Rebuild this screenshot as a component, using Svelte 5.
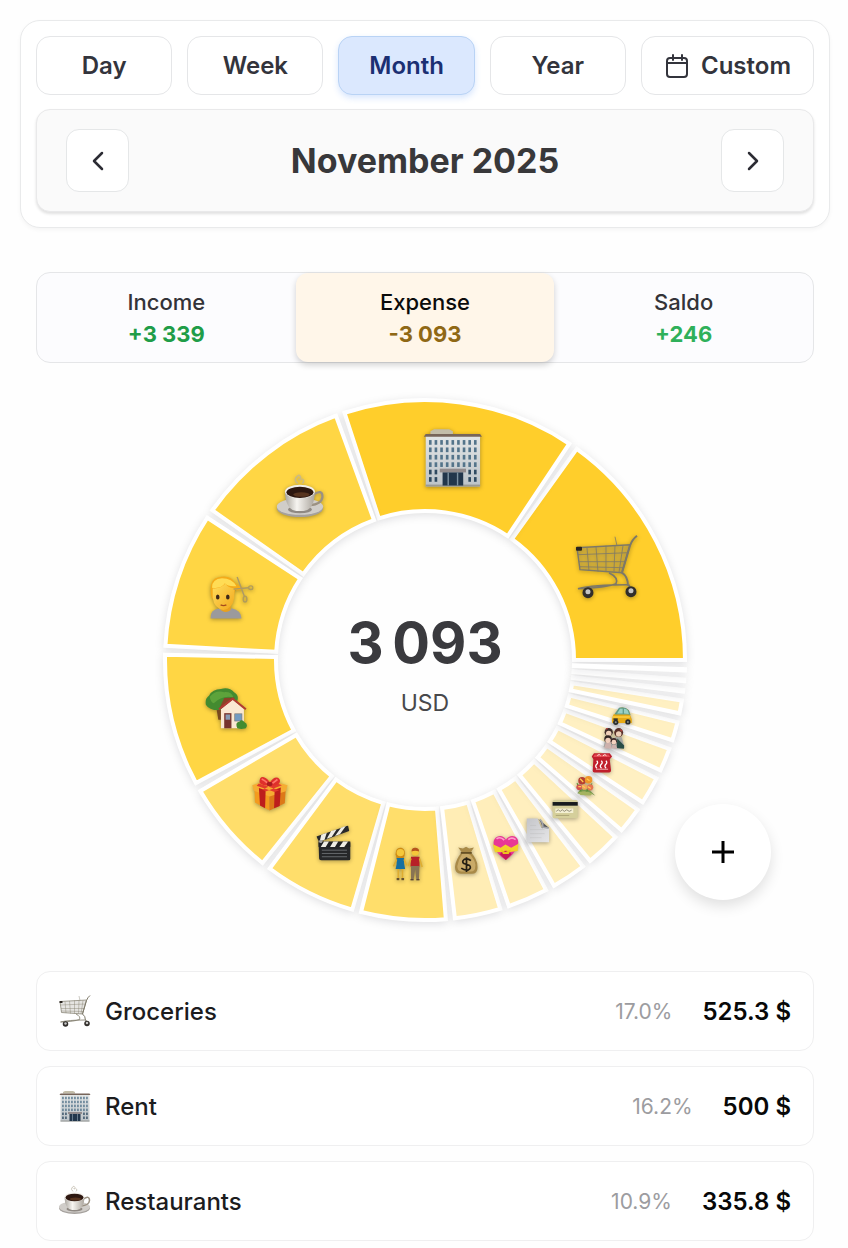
<script>
  const periods = ['Day', 'Week', 'Month', 'Year'];
  let period = $state('Month');

  const tabs = [
    { id: 'income', label: 'Income', value: '+3\u00a0339' },
    { id: 'expense', label: 'Expense', value: '-3\u00a0093' },
    { id: 'saldo', label: 'Saldo', value: '+246' }
  ];
  let activeTab = $state('expense');

  // share is in percent of the month total
  const categories = [
    { icon: 'cart', share: 17, size: 64, color: '#ffce2b' },
    { icon: 'office', share: 16.2, size: 60, color: '#ffce2b' },
    { icon: 'coffee', share: 10.9, size: 48, color: '#ffd644' },
    { icon: 'haircut', share: 9.4, size: 46, color: '#ffd644' },
    { icon: 'house', share: 9.2, size: 42, color: '#ffd644' },
    { icon: 'gift', share: 6.6, size: 36, color: '#ffde6b' },
    { icon: 'movie', share: 6.4, size: 35, color: '#ffde6b' },
    { icon: 'couple', share: 5.9, size: 34, color: '#ffde6b' },
    { icon: 'money', share: 3.2, size: 28, color: '#ffedb5' },
    { icon: 'heart', share: 2.8, size: 26, color: '#ffeebb' },
    { icon: 'paper', share: 2.4, size: 26, color: '#ffefbe' },
    { icon: 'card', share: 2.4, size: 26, color: '#ffefbe' },
    { icon: 'flowers', share: 1.8, size: 20, color: '#fff0c2' },
    { icon: 'toaster', share: 1.9, size: 21, color: '#fff0c2' },
    { icon: 'family', share: 1.6, size: 22, color: '#fff0c2' },
    { icon: 'car', share: 1.3, size: 21, color: '#fff0c2' },
    { share: 0.9, color: '#fff0c2' },
    { share: 0.1, color: '#fffdf6' },
    { share: 0.1, color: '#fffdf6' },
    { share: 0.1, color: '#fffdf6' }
  ];

  const cx = 389;
  const cy = 281;
  const outer = 260;
  const inner = 149;
  const pad = 2;

  function point(radius, deg) {
    const a = (deg * Math.PI) / 180;
    return { x: cx + radius * Math.cos(a), y: cy - radius * Math.sin(a) };
  }

  function buildSlices(items) {
    const total = items.reduce((sum, c) => sum + c.share, 0);
    const perUnit = (360 - items.length * pad) / total;
    let start = 0;
    return items.map(c => {
      const end = start + c.share * perUnit;
      const a = point(outer, start);
      const b = point(outer, end);
      const d = point(inner, end);
      const e = point(inner, start);
      const mid = point((outer + inner) / 2, (start + end) / 2);
      start = end + pad;
      return {
        ...c,
        mid,
        path: `M${a.x} ${a.y}A${outer} ${outer} 0 0 0 ${b.x} ${b.y}L${d.x} ${d.y}A${inner} ${inner} 0 0 1 ${e.x} ${e.y}Z`
      };
    });
  }

  const slices = buildSlices(categories);

  const rows = [
    { icon: 'cart', name: 'Groceries', percent: '17.0%', amount: '525.3 $' },
    { icon: 'office', name: 'Rent', percent: '16.2%', amount: '500 $' },
    { icon: 'coffee', name: 'Restaurants', percent: '10.9%', amount: '335.8 $' }
  ];
</script>

<svg class="sprite" aria-hidden="true">
  <defs>
    <linearGradient id="wall" x1="0" x2="0" y1="0" y2="1">
      <stop offset="0" stop-color="#e3e6e6" />
      <stop offset="1" stop-color="#bcc3c8" />
    </linearGradient>
    <linearGradient id="china" x1="0" x2="1" y1="0" y2="0">
      <stop offset="0" stop-color="#aaa69f" />
      <stop offset="0.4" stop-color="#f7f5f1" />
      <stop offset="1" stop-color="#aaa49c" />
    </linearGradient>
    <linearGradient id="skin" x1="0" x2="1" y1="0" y2="1">
      <stop offset="0" stop-color="#ffdf5e" />
      <stop offset="1" stop-color="#f2a81d" />
    </linearGradient>
    <linearGradient id="sheet" x1="0" x2="1" y1="0" y2="1">
      <stop offset="0" stop-color="#c4c5c9" />
      <stop offset="1" stop-color="#e6e6e8" />
    </linearGradient>
  </defs>

  <symbol id="cart" viewBox="0 0 64 64">
    <path d="M2 13L55 10L47 38L5 35Z" fill="#8a8578" fill-opacity="0.22" />
    <g fill="none" stroke="#7d7868" stroke-width="0.8">
      <path d="M2 13L55 10L47 38L5 35Z" stroke-width="1.4" />
      <path d="M3 20L53 18M4 27L50.500 27M4.500 32L49 33" />
      <path d="M12 13L14 36M21 12L23 37M31 11L31 37M40 11L39 37M48 11L44 38" />
      <path d="M40 2L42 11" />
      <path d="M62 1Q57 5 55 11L47 38Q53 42 53 51" stroke-width="2" />
      <path d="M34 38Q44 43 41 49Q31 53 3 54Q18 50 53 50" stroke-width="1.600" />
      <path d="M54 50L55 56M13 52L14 57" stroke-width="2" />
    </g>
    <rect x="1" y="12" width="6" height="4" rx="1" fill="#29241f" />
    <circle cx="13" cy="58" r="5.500" fill="#312e2b" />
    <circle cx="56" cy="57" r="5.500" fill="#312e2b" />
    <circle cx="13" cy="57" r="2.500" fill="#c5c5c4" />
    <circle cx="56" cy="56" r="2.500" fill="#c5c5c4" />
  </symbol>

  <symbol id="office" viewBox="0 0 64 64">
    <path d="M8 7V4L12 2H28L32 4V7Z" fill="#c3bda9" />
    <rect x="3" y="9" width="58" height="54" fill="url(#wall)" />
    <path d="M3 7H61L63 10H1Z" fill="#77655a" />
    <rect x="3" y="61" width="58" height="2" fill="#9a9a95" />
    {#each [0, 1, 2, 3, 4, 5] as r}
      {#each [0, 1, 2, 3, 4, 5, 6, 7, 8] as c}
        {#if r < 4 || c < 2 || c > 6}
          <rect x={6.500 + c * 6} y={13.500 + r * 7.900} width="2.800" height="5" fill={r > 3 ? '#2f4a60' : '#53748a'} />
        {/if}
      {/each}
    {/each}
    <rect x="18" y="44" width="28" height="4" fill="#918b8d" />
    <rect x="21" y="48" width="22" height="14" fill="#22364b" />
    <path d="M27 48V62M37 48V62" stroke="#7d92a1" stroke-width="1.500" />
  </symbol>

  <symbol id="coffee" viewBox="0 0 64 64">
    <path d="M28 13Q22 8 27 4Q30 0 32 5Q33 10 29 7M34 13Q38 10 34 7" fill="none" stroke="#b9b2a3" stroke-opacity="0.700" stroke-width="2" />
    <ellipse cx="31" cy="46" rx="31" ry="12" fill="#a5a19d" />
    <ellipse cx="31" cy="44" rx="31" ry="11" fill="#d0cdc9" />
    <ellipse cx="31" cy="48" rx="16" ry="5" fill="#8f8983" />
    <path d="M49 28Q61 20 61 31Q60 41 44 42" fill="none" stroke="#9b9182" stroke-width="3" />
    <path d="M11 25Q12 48 26 50H36Q50 48 51 25Z" fill="url(#china)" />
    <ellipse cx="31" cy="24" rx="20" ry="9" fill="#f1eee9" />
    <ellipse cx="31" cy="25" rx="18" ry="7.500" fill="#2d1710" />
    <ellipse cx="33" cy="28" rx="11" ry="3" fill="#58341f" />
  </symbol>

  <symbol id="haircut" viewBox="0 0 64 64">
    <path d="M4 63Q3 50 16 49H34Q46 51 47 63Z" fill="#9b9a9c" />
    <path d="M18 41H32V51Q25 57 18 51Z" fill="#e9a11e" />
    <path d="M5 32Q1 9 14 6Q31 1 38 13Q44 18 50 20Q43 26 38 23L36 35H6Z" fill="#f5ab19" />
    <path d="M7 21Q19 22 25 14Q27 20 37 21V34Q35 49 22 51Q9 49 7 34Z" fill="url(#skin)" />
    <path d="M6 20Q6 8 20 7Q34 7 40 18Q28 19 24 14Q19 22 6 20Z" fill="#ffdc55" />
    <ellipse cx="14" cy="33" rx="2.500" ry="3.500" fill="#3d281a" />
    <ellipse cx="28" cy="33" rx="2.500" ry="3.500" fill="#3d281a" />
    <path d="M18 44Q22 46 26 44" fill="none" stroke="#a64a1c" stroke-width="2" />
    <path d="M41 5L51 32M36 22L57 20" stroke="#ad9a65" stroke-width="2" />
    <ellipse cx="60" cy="20" rx="3" ry="2.500" fill="none" stroke="#b29d5a" stroke-width="2" />
    <ellipse cx="52" cy="36" rx="2.500" ry="4" fill="none" stroke="#b29d5a" stroke-width="2" />
  </symbol>

  <symbol id="house" viewBox="0 0 64 64">
    <path d="M17 32L24 29L28 50H20Z" fill="#79491f" />
    <path d="M1 27Q-1 18 6 13Q11 3 24 3Q37 0 44 8Q53 13 48 24Q43 35 26 35Q7 37 1 27Z" fill="#438b30" />
    <path d="M7 15Q16 4 29 8Q40 7 43 16Q26 12 13 25Q8 23 7 15Z" fill="#5da33b" />
    <path d="M21 34L29 17L45 16L38 28Z" fill="#894427" />
    <path d="M24 34L42 19L59 34V63H24Z" fill="#fae8d2" />
    <path d="M21 34L42 18L62 34" fill="none" stroke="#b23a33" stroke-width="3" />
    <rect x="29" y="40" width="11" height="23" fill="#77332c" />
    <rect x="31" y="42" width="7" height="8" fill="#879bb3" />
    <rect x="45" y="41" width="11" height="11" fill="#739bc2" stroke="#7e7875" stroke-width="1" />
    <path d="M49 63Q45 54 52 53Q56 48 60 54Q66 57 62 63Q55 65 49 63Z" fill="#438b30" />
  </symbol>

  <symbol id="gift" viewBox="0 0 64 64">
    <path d="M4 19L31 29V62L5 48Z" fill="#f39b1e" />
    <path d="M31 29L60 19L58 49L31 62Z" fill="#dd7918" />
    <path d="M0 17L29 8L63 17L60 28L31 37L3 27Z" fill="#f6ac32" />
    <path d="M12 22L24 26L23 58L14 53ZM40 25L51 21L49 54L39 58Z" fill="#bd1e1c" />
    <path d="M12 14L48 26L40 29L8 18ZM43 13L18 25L25 28L53 17Z" fill="#e23a2c" />
    <path d="M31 18Q15 18 13 12Q13 1 21 3Q29 6 31 13Q39 1 46 4Q52 8 48 14Q42 19 31 18Z" fill="#df302b" />
    <path d="M17 6Q22 8 27 13M45 7L36 14" stroke="#ff7668" stroke-width="3" />
    <ellipse cx="31" cy="15" rx="5" ry="4" fill="#a91c20" />
  </symbol>

  <symbol id="movie" viewBox="0 0 64 64">
    <path d="M4 31H62V61Q62 64 58 64H9Q5 63 5 60Z" fill="#262729" />
    <path d="M0 20L58 0L60 10L5 30Z" fill="#28292b" />
    <path d="M9 17L19 13L15 26L6 29ZM27 10L37 7L28 21L19 24ZM45 4L54 1L43 16L34 19Z" fill="#efede5" />
    <rect x="4" y="29" width="58" height="10" fill="#222325" />
    <path d="M14 29H23L17 39H8ZM31 29H40L34 39H25ZM49 29H58L51 39H42Z" fill="#efede5" />
    <path d="M10 45H56M10 51H56M10 57H56" stroke="#73767a" stroke-width="1.500" />
    <circle cx="8" cy="29" r="3" fill="#a2a4a7" />
  </symbol>

  <symbol id="couple" viewBox="0 0 64 64">
    <path d="M9 14Q9 0 20 2Q28 4 26 16L24 22H11Z" fill="#cf8b12" />
    <circle cx="18" cy="11" r="7" fill="#f5c73a" />
    <path d="M11 21H25L25 32L27 42H9L11 33Z" fill="#176fa0" />
    <path d="M11 24L5 37M25 24L30 35M14 42V60M22 42V60" stroke="#dfad31" stroke-width="3" />
    <path d="M11 61H16M20 61H25" stroke="#66522f" stroke-width="4" />
    <circle cx="46" cy="10" r="7" fill="#f5c73a" />
    <path d="M39 9Q39 1 47 2Q54 3 53 9Q46 6 39 9Z" fill="#b6551e" />
    <path d="M38 19H54L54 37H37Z" fill="#b72027" />
    <path d="M38 22L33 36M54 22L59 38" stroke="#dfad31" stroke-width="3" />
    <path d="M38 36H54L53 61H48L46 43L43 61H38Z" fill="#897453" />
    <path d="M37 62H43M48 62H54" stroke="#594536" stroke-width="3" />
  </symbol>

  <symbol id="money" viewBox="0 0 64 64">
    <path d="M21 14L13 3L24 5L31 1L38 5L49 3L42 14Q57 31 57 45Q59 63 44 63H19Q4 62 6 45Q8 30 21 14Z" fill="#a98a48" />
    <path d="M22 18Q37 14 44 24Q54 37 52 47Q52 58 42 58H20Q11 57 11 46Q14 30 22 18Z" fill="#c9aa68" />
    <path d="M19 15H44" stroke="#665025" stroke-width="4" />
    <path d="M42 33Q35 27 27 30Q21 34 25 39L39 44Q44 50 36 54Q28 56 20 50M32 25V59" fill="none" stroke="#251f13" stroke-width="4" />
  </symbol>

  <symbol id="heart" viewBox="0 0 64 64">
    <path d="M32 12Q41 0 54 4Q67 11 60 28Q53 48 32 62Q10 49 3 28Q-2 10 12 4Q25 0 32 12Z" fill="#e83795" />
    <path d="M9 10Q19 3 28 13M38 12Q47 4 56 12" fill="none" stroke="#ff9dcb" stroke-width="4" />
    <path d="M0 23L19 32L31 24L45 32L63 22L61 40L42 42L38 48H26L21 42L5 43Z" fill="#f2d229" />
    <path d="M22 42Q32 36 42 42L46 48L32 62L17 48Z" fill="#c71957" />
    <path d="M20 37L31 42L45 36L39 47H25Z" fill="#ebc21e" />
  </symbol>

  <symbol id="paper" viewBox="0 0 64 64">
    <path d="M4 3H31Q34 16 40 26H59V61H4Z" fill="url(#sheet)" />
    <path d="M31 3L59 26Q48 24 42 27Q42 14 31 3Z" fill="#55565b" />
    <path d="M36 5Q45 12 43 24L58 27" fill="none" stroke="#a3a4a9" stroke-width="4" />
    <path d="M12 20H27M12 30H48M12 40H48M12 50H40" stroke="#bbb" stroke-width="1" />
  </symbol>

  <symbol id="card" viewBox="0 0 64 64">
    <rect x="1" y="10" width="62" height="45" rx="4" fill="#d5cf9b" />
    <rect x="1" y="15" width="62" height="9" fill="#171b1e" />
    <rect x="8" y="31" width="44" height="11" fill="#f4f0d3" />
    <path d="M10 38L15 34L20 38L25 34L30 38L36 34L42 38L48 35" fill="none" stroke="#807a68" stroke-width="2" />
    <path d="M9 48H42" stroke="#a39c6e" stroke-width="2" />
  </symbol>

  <symbol id="flowers" viewBox="0 0 64 64">
    <path d="M21 34Q42 29 46 48L62 63L40 52Q25 60 4 55Z" fill="#78984f" />
    <path d="M3 23L18 53M51 24L30 55" stroke="#5b8e35" stroke-width="4" />
    <circle cx="19" cy="15" r="12" fill="#b64031" />
    <circle cx="40" cy="12" r="12" fill="#ef9629" />
    <circle cx="10" cy="36" r="9" fill="#d4504d" />
    <circle cx="45" cy="36" r="10" fill="#e57552" />
    <circle cx="27" cy="35" r="9" fill="#f0a65c" />
    <path d="M13 9L23 19M34 9L43 15M7 34H16M38 34L47 40M20 31L29 38" stroke="#ffcc53" stroke-width="4" />
    <path d="M7 53Q31 43 52 57L46 62L14 61Z" fill="#a5b35f" />
  </symbol>

  <symbol id="toaster" viewBox="0 0 64 64">
    <path d="M6 22L1 13L8 3H56L63 13L56 22L60 56Q60 62 54 62H9Q3 62 4 56Z" fill="#c01f2c" />
    <path d="M10 7H53L57 15H6Z" fill="#e64a53" />
    <path d="M18 10Q25 4 28 11M35 11Q42 4 46 11" fill="none" stroke="#fff3e8" stroke-width="3" />
    <path d="M16 26Q22 31 16 37T17 49M30 26Q36 31 30 37T31 49M44 26Q50 31 44 37T45 49" fill="none" stroke="#fff" stroke-width="4" />
    <path d="M14 52H51" stroke="#efb1b4" stroke-width="3" />
  </symbol>

  <symbol id="family" viewBox="0 0 64 64">
    <circle cx="17" cy="14" r="12" fill="#412e2b" />
    <circle cx="46" cy="15" r="13" fill="#57302a" />
    <circle cx="17" cy="18" r="8" fill="#efd0b9" />
    <circle cx="46" cy="19" r="8" fill="#efd0b9" />
    <path d="M2 57L9 28H27L36 59ZM35 29H55L63 60L34 62Z" fill="#a5a6a2" />
    <path d="M42 32L62 53L61 62L40 60Z" fill="#284c45" />
    <circle cx="15" cy="34" r="11" fill="#302522" />
    <circle cx="15" cy="38" r="8" fill="#f0cfbc" />
    <circle cx="32" cy="40" r="9" fill="#3c2929" />
    <circle cx="32" cy="43" r="7" fill="#f3d2bf" />
    <path d="M4 61L8 46L23 44L25 62ZM25 61L28 51H38L42 62Z" fill="#cdb1ac" />
    <path d="M50 6L56 11M9 5L14 3" stroke="#b2423d" stroke-width="4" />
  </symbol>

  <symbol id="car" viewBox="0 0 64 64">
    <path d="M2 43L7 27L18 22L27 7Q43 4 54 14L59 32L63 42V53H3Z" fill="#e7aa16" />
    <path d="M11 25L24 7Q41 2 54 14L59 29L50 27H11Z" fill="#629b89" />
    <path d="M18 24L27 10H35V24ZM39 10Q48 10 51 16L54 26L39 24Z" fill="#9bd1c4" />
    <path d="M4 35H57" stroke="#ffcf42" stroke-width="5" />
    <rect x="7" y="39" width="13" height="6" fill="#343632" />
    <circle cx="14" cy="51" r="8" fill="#292d2e" />
    <circle cx="51" cy="50" r="8" fill="#292d2e" />
    <circle cx="14" cy="51" r="3" fill="#8c908c" />
    <circle cx="51" cy="50" r="3" fill="#8c908c" />
  </symbol>
</svg>

<main class="page">
  <section class="period-card">
    <div class="periods">
      {#each periods as p}
        <button class="period" class:active={period === p} onclick={() => (period = p)}>{p}</button>
      {/each}
      <button class="period" class:active={period === 'Custom'} onclick={() => (period = 'Custom')}>
        <svg width="26" height="26" viewBox="0 0 26 26" fill="none" stroke="currentColor" stroke-width="2" stroke-linecap="round" aria-hidden="true">
          <rect x="3" y="5" width="20" height="19" rx="3" />
          <path d="M9 2V7M18 2V7M3 10H23" />
        </svg>
        Custom
      </button>
    </div>

    <div class="month-bar">
      <button class="nav" aria-label="Previous month">
        <svg width="24" height="24" viewBox="0 0 24 24" aria-hidden="true"><path d="M16 4L8 12L16 20" /></svg>
      </button>
      <h1>November 2025</h1>
      <button class="nav" aria-label="Next month">
        <svg width="24" height="24" viewBox="0 0 24 24" aria-hidden="true"><path d="M8 4L16 12L8 20" /></svg>
      </button>
    </div>
  </section>

  <div class="content">
    <div class="tabs">
      {#each tabs as tab}
        <button class="tab {tab.id}" class:selected={activeTab === tab.id} onclick={() => (activeTab = tab.id)}>
          <span class="tab-label">{tab.label}</span>
          <span class="tab-value">{tab.value}</span>
        </button>
      {/each}
    </div>

    <div class="chart">
      <svg class="donut" viewBox="0 0 778 576" role="img" aria-label="Expenses by category">
        {#each slices as slice}
          <path class="slice" d={slice.path} fill={slice.color} />
        {/each}
        {#each slices as slice}
          {#if slice.icon}
            <use
              class="slice-icon"
              href="#{slice.icon}"
              x={slice.mid.x - slice.size / 2}
              y={slice.mid.y - slice.size / 2}
              width={slice.size}
              height={slice.size}
            />
          {/if}
        {/each}
        <text class="total" x={cx} y="284">3&#8239;093</text>
        <text class="currency" x={cx} y="332">USD</text>
      </svg>
      <button class="add" aria-label="Add expense">
        <svg width="24" height="24" viewBox="0 0 24 24" aria-hidden="true"><path d="M12 1V23M1 12H23" /></svg>
      </button>
    </div>

    <ul class="rows">
      {#each rows as row}
        <li class="row">
          <svg class="row-icon" aria-hidden="true"><use href="#{row.icon}" /></svg>
          <span class="name">{row.name}</span>
          <span class="percent">{row.percent}</span>
          <span class="amount">{row.amount}</span>
        </li>
      {/each}
    </ul>
  </div>
</main>

<style>
  :global(body) {
    background: #fefefe;
  }

  .sprite {
    position: absolute;
    width: 0;
    height: 0;
  }

  .page {
    box-sizing: border-box;
    padding: 20px 18px 6px 20px;
    font-family: Inter, 'Liberation Sans', sans-serif;
    color: #1c1c1e;
  }

  button {
    font-family: inherit;
    color: inherit;
    padding: 0;
    cursor: pointer;
  }

  .period-card {
    border: 1px solid #e9eaeb;
    border-radius: 20px;
    padding: 15px;
    background: #fff;
    box-shadow: 0 2px 4px rgba(0, 0, 0, 0.04);
  }

  .periods {
    display: grid;
    grid-template-columns: repeat(4, 1fr) auto;
    gap: 15px;
  }

  .period {
    display: flex;
    align-items: center;
    justify-content: center;
    gap: 11px;
    height: 59px;
    padding: 0 22px;
    border: 1px solid #e5e6e8;
    border-radius: 14px;
    background: #fff;
    color: #33343c;
    font-size: 24px;
    font-weight: 600;
  }

  .period.active {
    background: #dbe8fe;
    border-color: #b9d3f5;
    color: #1b2f73;
    box-shadow: 0 3px 6px rgba(59, 130, 246, 0.2);
  }

  .month-bar {
    display: flex;
    align-items: center;
    justify-content: space-between;
    margin-top: 14px;
    padding: 19px 29px;
    border: 1px solid #e9e9ea;
    border-radius: 14px;
    background: #fafafa;
    box-shadow: 0 2px 3px rgba(0, 0, 0, 0.12);
  }

  h1 {
    margin: 0;
    font-size: 34px;
    line-height: 44px;
    font-weight: 700;
    color: #38383a;
  }

  .nav {
    display: grid;
    place-items: center;
    width: 63px;
    height: 63px;
    border: 1px solid #e5e7e8;
    border-radius: 13px;
    background: #fff;
  }

  .nav path {
    fill: none;
    stroke: #2c2c34;
    stroke-width: 2.5;
    stroke-linecap: round;
    stroke-linejoin: round;
  }

  .content {
    padding: 0 16px;
  }

  .tabs {
    display: grid;
    grid-template-columns: repeat(3, 1fr);
    margin-top: 44px;
    border: 1px solid #e5e6e8;
    border-radius: 14px;
    background: #fcfcfe;
  }

  .tab {
    display: flex;
    flex-direction: column;
    align-items: center;
    padding: 13px 0 12px;
    border: 0;
    border-radius: 12px;
    background: none;
    font-size: 22px;
    line-height: 32px;
  }

  .tab-label {
    font-weight: 500;
    color: #333338;
  }

  .tab-value {
    font-weight: 700;
    color: #1f9d48;
  }

  .saldo .tab-value {
    color: #2fb05a;
  }

  .expense .tab-value {
    color: #8f6815;
  }

  .tab.selected {
    background: #fff6e9;
    box-shadow: 0 3px 6px rgba(0, 0, 0, 0.18);
  }

  .tab.selected .tab-label {
    color: #0b0b0b;
  }

  .chart {
    position: relative;
    margin: 16px 0;
  }

  .donut {
    display: block;
    width: 100%;
  }

  .slice {
    stroke: #fff;
    stroke-width: 4;
    filter: drop-shadow(0 2px 4px rgba(0, 0, 20, 0.12));
  }

  .slice-icon {
    filter: drop-shadow(0 1px 2px rgba(0, 0, 0, 0.35));
  }

  .donut text {
    text-anchor: middle;
  }

  .total {
    font-size: 56px;
    font-weight: 700;
    fill: #3a3a3e;
  }

  .currency {
    font-size: 23px;
    fill: #48484b;
  }

  .add {
    position: absolute;
    right: 43px;
    bottom: 55px;
    display: grid;
    place-items: center;
    width: 96px;
    height: 96px;
    border: 0;
    border-radius: 50%;
    background: #fff;
    box-shadow: 0 6px 14px rgba(0, 0, 0, 0.12);
  }

  .add path {
    stroke: #000;
    stroke-width: 3;
  }

  .rows {
    display: flex;
    flex-direction: column;
    gap: 15px;
    margin: 0;
    padding: 0;
    list-style: none;
  }

  .row {
    display: flex;
    align-items: center;
    box-sizing: border-box;
    height: 80px;
    padding: 0 22px;
    border: 1px solid #efeff0;
    border-radius: 14px;
    background: #fff;
    font-size: 24px;
  }

  .row-icon {
    width: 32px;
    height: 32px;
  }

  .name {
    margin-left: 14px;
    font-weight: 500;
  }

  .percent {
    margin-left: auto;
    font-size: 21px;
    color: #9c9ca0;
  }

  .amount {
    margin-left: 30px;
    font-weight: 600;
    color: #080808;
  }
</style>
